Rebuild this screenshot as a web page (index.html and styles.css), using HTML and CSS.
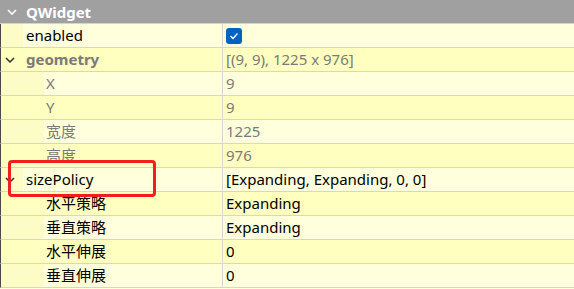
FILE: index.html
```html
<!DOCTYPE html>
<html lang="zh-CN">
<head>
    <meta charset="UTF-8">
    <title>属性编辑器</title>
    <link rel="stylesheet" href="styles.css">
</head>
<body>
    <div class="browser">
        <div class="group-header">
            <span class="branch">
                <svg width="10" height="6" viewBox="0 0 10 6"><polyline points="1,1 5,5 9,1" fill="none" stroke="#fff" stroke-width="1.6"/></svg>
            </span>
            <span class="group-title">QWidget</span>
        </div>

        <div class="row light">
            <div class="name"><span class="indent lvl0"></span><span class="label">enabled</span></div>
            <div class="value">
                <span class="check">
                    <svg width="10" height="8" viewBox="0 0 10 8"><polyline points="1.5,4 4,6.5 8.5,1.5" fill="none" stroke="#fff" stroke-width="1.3"/></svg>
                </span>
            </div>
        </div>

        <div class="row yellow">
            <div class="name">
                <span class="indent lvl0">
                    <svg width="10" height="6" viewBox="0 0 10 6"><polyline points="1,1 5,5 9,1" fill="none" stroke="#333" stroke-width="1.5"/></svg>
                </span>
                <span class="label bold muted">geometry</span>
            </div>
            <div class="value muted">[(9, 9), 1225 x 976]</div>
        </div>

        <div class="row light">
            <div class="name"><span class="indent lvl1"></span><span class="label muted">X</span></div>
            <div class="value muted">9</div>
        </div>
        <div class="row yellow">
            <div class="name"><span class="indent lvl1"></span><span class="label muted">Y</span></div>
            <div class="value muted">9</div>
        </div>
        <div class="row light">
            <div class="name"><span class="indent lvl1"></span><span class="label muted">宽度</span></div>
            <div class="value muted">1225</div>
        </div>
        <div class="row yellow">
            <div class="name"><span class="indent lvl1"></span><span class="label muted">高度</span></div>
            <div class="value muted">976</div>
        </div>

        <div class="row light">
            <div class="name">
                <span class="indent lvl0">
                    <svg width="10" height="6" viewBox="0 0 10 6"><polyline points="1,1 5,5 9,1" fill="none" stroke="#333" stroke-width="1.5"/></svg>
                </span>
                <span class="label">sizePolicy</span>
            </div>
            <div class="value">[Expanding, Expanding, 0, 0]</div>
            <div class="mark"></div>
        </div>

        <div class="row yellow">
            <div class="name"><span class="indent lvl1"></span><span class="label">水平策略</span></div>
            <div class="value">Expanding</div>
        </div>
        <div class="row light">
            <div class="name"><span class="indent lvl1"></span><span class="label">垂直策略</span></div>
            <div class="value">Expanding</div>
        </div>
        <div class="row yellow">
            <div class="name"><span class="indent lvl1"></span><span class="label">水平伸展</span></div>
            <div class="value">0</div>
        </div>
        <div class="row light">
            <div class="name"><span class="indent lvl1"></span><span class="label">垂直伸展</span></div>
            <div class="value">0</div>
        </div>
    </div>
</body>
</html>
```

FILE: styles.css
```css
* {
    margin: 0;
    padding: 0;
    box-sizing: border-box;
}

body {
    background: #ffffdc;
    font-family: 'Noto Sans', 'Noto Sans CJK SC', sans-serif;
    font-size: 15px;
    color: #000;
    width: 574px;
    height: 289px;
    overflow: hidden;
}

.browser {
    display: flex;
    flex-direction: column;
}

.group-header {
    display: flex;
    align-items: center;
    height: 24px;
    background: #a0a0a0;
    border-bottom: 1px solid #d4d4d4;
    color: #fff;
    font-weight: 700;
}

.branch {
    display: flex;
    align-items: center;
    justify-content: center;
    width: 24px;
    height: 100%;
}

.group-title {
    padding-left: 2px;
    line-height: 22px;
}

.row {
    position: relative;
    display: flex;
    height: 24px;
    border-bottom: 1px solid #d6d6d0;
    border-left: 1px solid #4a4a4a;
}

.row.light {
    background: #ffffdc;
}

.row.yellow {
    background: #ffffbf;
}

.name {
    display: flex;
    width: 222px;
    flex-shrink: 0;
    border-right: 1px solid #d6d6d0;
}

.indent {
    display: flex;
    align-items: center;
    justify-content: center;
    height: 100%;
    background: #fdfbc6;
}

.row.yellow .indent {
    background: #ffffbf;
}

.indent.lvl0 {
    width: 22px;
    padding-right: 4px;
}

.indent.lvl1 {
    width: 43px;
}

.label {
    padding-left: 3px;
    line-height: 23px;
    white-space: nowrap;
}

.indent.lvl1 + .label {
    padding-left: 2px;
}

.bold {
    font-weight: 700;
}

.muted {
    color: #7a7a7a;
}

.value {
    display: flex;
    align-items: center;
    padding-left: 3px;
    line-height: 23px;
    white-space: nowrap;
}

.check {
    display: flex;
    align-items: center;
    justify-content: center;
    width: 16px;
    height: 16px;
    border-radius: 3px;
    background: #0063c4;
}

/* red annotation box over the sizePolicy row */
.mark {
    position: absolute;
    z-index: 2;
    left: 7px;
    top: -8px;
    width: 148px;
    height: 37px;
    border: 3.5px solid #f21d1d;
    border-radius: 4px;
    pointer-events: none;
}
```
